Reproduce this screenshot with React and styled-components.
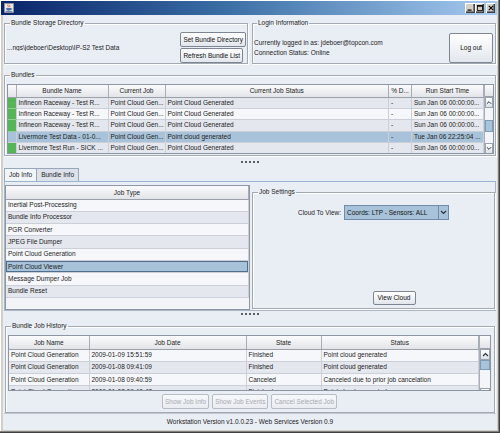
import React from 'react';
import styled, { createGlobalStyle, css } from 'styled-components';

const GlobalStyle = createGlobalStyle`
  html, body { margin: 0; padding: 0; width: 500px; height: 433px; overflow: hidden; background: #d4d0c8; }
  body { font-family: "Liberation Sans", Arial, sans-serif; font-size: 6.5px; color: #1c1c1c; }
  * { box-sizing: border-box; }
`;

const Window = styled.div`
  width: 500px;
  height: 433px;
  display: flex;
  flex-direction: column;
  padding: 1px 3px 3px 1px;
  background: #d4d0c8;
  box-shadow: inset -1px -1px 0 #404040, inset -2px -2px 0 #808080, inset 1px 1px 0 #ffffff;
`;

const TitleBar = styled.div`
  height: 14px;
  flex: none;
  display: flex;
  align-items: center;
  padding: 0 2px 0 3px;
  background: linear-gradient(to right, #0a246a 0%, #3a6ea5 45%, #a6caf0 100%);
`;

const TitleButtons = styled.div`
  margin-left: auto;
  display: flex;
  align-items: center;
`;

const WinButton = styled.div`
  width: ${p => p.$w || 10}px;
  height: 10px;
  margin-left: ${p => p.$gap || 0}px;
  background: #d4d0c8;
  box-shadow: inset 1px 1px 0 #ffffff, inset -1px -1px 0 #404040, inset -2px -2px 0 #808080;
  display: flex;
  align-items: center;
  justify-content: center;
`;

const Body = styled.div`
  flex: 1;
  margin-left: 2px;
  background: #e9edf4;
  display: flex;
  flex-direction: column;
  padding: 4px 1px 0 1px;
  min-height: 0;
`;

const TopRow = styled.div`
  display: grid;
  grid-template-columns: 244px 1fr;
  gap: 4px;
  height: 45px;
  flex: none;
`;

const Group = styled.fieldset`
  margin: ${p => p.$margin || '0'};
  min-width: 0;
  min-inline-size: 0;
  height: ${p => p.$h}px;
  padding: ${p => p.$pad || '5px 1px 0 2px'};
  border: 1px solid #a2a9b3;
  box-shadow: inset 1px 1px 0 #ffffff, 1px 1px 0 #ffffff;
  display: flex;
  flex-direction: ${p => p.$dir || 'row'};
  align-items: ${p => p.$align || 'stretch'};
  justify-content: ${p => p.$justify || 'flex-start'};
  flex: none;
`;

const Legend = styled.legend`
  padding: 0 1px;
  margin-left: 3px;
  line-height: 8px;
  font-size: 6.5px;
  color: #222;
`;

const PathText = styled.span`
  flex: 1;
  white-space: nowrap;
  overflow: hidden;
`;

const ButtonStack = styled.div`
  display: flex;
  flex-direction: column;
  align-items: flex-start;
  gap: 1px;
`;

const Button = styled.button`
  font-family: inherit;
  font-size: 6.5px;
  height: ${p => p.$h || 15}px;
  width: ${p => (p.$w ? `${p.$w}px` : 'auto')};
  padding: 0 2px;
  margin: 0;
  border: 1px solid #7d8692;
  border-radius: 2px;
  background: linear-gradient(#ffffff, #e2e6ec);
  color: #111;
  white-space: nowrap;
  line-height: 12px;
  flex: none;
  ${p => p.disabled && css`
    color: #a6abb3;
    border-color: #b7bdc5;
    background: linear-gradient(#f7f8fa, #e9ecf1);
  `}
`;

const InfoLines = styled.div`
  flex: 1;
  display: flex;
  flex-direction: column;
  line-height: 10px;
  white-space: nowrap;
`;

const TableFrame = styled.div`
  display: grid;
  grid-template-columns: 1fr ${p => p.$sb}px;
  height: ${p => p.$h}px;
  border: 1px solid #8d97a4;
  background: #f2f4f8;
  overflow: hidden;
  flex: none;
`;

const Table = styled.table`
  width: 100%;
  table-layout: fixed;
  border-collapse: collapse;
  border-spacing: 0;
  font-size: 6.5px;
  align-self: start;
`;

const Th = styled.th`
  height: ${p => p.$h}px;
  padding: 0;
  font-weight: normal;
  text-align: center;
  color: #222;
  background: linear-gradient(#fbfbfc, #e2e4e8);
  border-right: 1px solid #a8aeb7;
  border-bottom: 1px solid #9aa1ab;
  white-space: nowrap;
  overflow: hidden;
`;

const tones = {
  white: '#f6f7fa',
  gray: '#e4e7ed',
  sel: '#a8c3d9',
};

const Tr = styled.tr`
  height: ${p => p.$h}px;
  background: ${p => tones[p.$tone]};
`;

const Td = styled.td`
  padding: 0 1px 0 2px;
  border-right: 1px solid #cbd0d8;
  border-bottom: 1px solid #cbd0d8;
  white-space: nowrap;
  overflow: hidden;
  text-overflow: clip;
  line-height: 10px;
  ${p => p.$green && css`background: #56b556; border-bottom-color: #8fcf8f;`}
  ${p => p.$focus && css`box-shadow: inset 0 0 0 1px #4f6d8c;`}
`;

const SideCol = styled.div`
  display: flex;
  flex-direction: column;
  border-left: 1px solid #a8aeb7;
`;

const Corner = styled.div`
  height: ${p => p.$h}px;
  flex: none;
  background: linear-gradient(#fbfbfc, #e2e4e8);
  border-bottom: 1px solid #9aa1ab;
`;

const ScrollTrack = styled.div`
  flex: 1;
  display: flex;
  flex-direction: column;
  background: #f3f5f8;
`;

const ArrowBtn = styled.div`
  height: ${p => p.$h}px;
  flex: none;
  border: 1px solid #9aa3ae;
  background: linear-gradient(#ffffff, #dde1e7);
  display: flex;
  align-items: center;
  justify-content: center;
`;

const TrackSpace = styled.div`
  flex: 1;
  display: flex;
  flex-direction: column;
`;

const Thumb = styled.div`
  margin-top: ${p => p.$top}px;
  height: ${p => p.$h}px;
  border: 1px solid #7e9bb6;
  background: #a9c4da;
`;

const Splitter = styled.div`
  height: ${p => p.$h}px;
  flex: none;
  display: flex;
  justify-content: center;
  padding-top: ${p => p.$top}px;
  gap: 2px;
`;

const Dot = styled.span`
  width: 2px;
  height: 2px;
  background: #5a5f66;
`;

const TabStrip = styled.div`
  height: 13px;
  flex: none;
  display: flex;
  align-items: flex-end;
`;

const Tab = styled.div`
  height: 13px;
  padding: 0 4px;
  line-height: 12px;
  border: 1px solid #97a6b8;
  border-bottom: none;
  background: ${p => (p.$active ? '#f1f4f9' : '#dde2ea')};
  margin-left: ${p => (p.$active ? 0 : -1)}px;
  white-space: nowrap;
`;

const TabPanel = styled.div`
  height: 130px;
  flex: none;
  border: 1px solid #a9b5c4;
  border-top: 1px solid #98b4d0;
  padding: 3px 0 0 0;
  display: grid;
  grid-template-columns: 245px 1fr;
  gap: 2px;
  align-items: start;
`;

const ListFrame = styled.div`
  height: 125px;
  border: 1px solid #8d97a4;
  background: #f2f4f8;
  overflow: hidden;
`;

const FieldRow = styled.div`
  display: flex;
  align-items: center;
  justify-content: center;
  gap: 3px;
  white-space: nowrap;
`;

const Combo = styled.div`
  width: 105px;
  height: 15px;
  display: flex;
  border: 1px solid #6f8cab;
  background: #a8c3d9;
`;

const ComboText = styled.span`
  flex: 1;
  padding-left: 2px;
  line-height: 13px;
  white-space: nowrap;
  overflow: hidden;
  color: #111;
`;

const ComboArrow = styled.div`
  width: 10px;
  border-left: 1px solid #6f8cab;
  display: flex;
  align-items: center;
  justify-content: center;
`;

const ViewRow = styled.div`
  margin-top: auto;
  display: flex;
  justify-content: center;
  padding-left: 41px;
`;

const ButtonRow = styled.div`
  margin-top: 3px;
  display: flex;
  justify-content: center;
  gap: 3px;
`;

const StatusBar = styled.div`
  height: 17px;
  flex: none;
  border-top: 1px solid #c4c9d1;
  text-align: center;
  line-height: 15px;
  white-space: nowrap;
`;

const Chevron = ({ up }) => (
  <svg width="7" height="5" viewBox="0 0 7 5">
    <polyline
      points={up ? '1,4 3.5,1.5 6,4' : '1,1 3.5,3.5 6,1'}
      fill="none"
      stroke="#2b2f36"
      strokeWidth="1.1"
    />
  </svg>
);

const Scrollbar = ({ arrowH, thumbTop, thumbH }) => (
  <ScrollTrack>
    <ArrowBtn $h={arrowH}><Chevron up /></ArrowBtn>
    <TrackSpace>
      <Thumb $top={thumbTop} $h={thumbH} />
    </TrackSpace>
    <ArrowBtn $h={arrowH}><Chevron /></ArrowBtn>
  </ScrollTrack>
);

const Dots = ({ h, top }) => (
  <Splitter $h={h} $top={top}>
    {[0, 1, 2, 3, 4].map(i => <Dot key={i} />)}
  </Splitter>
);

const JavaIcon = () => (
  <svg width="10" height="10" viewBox="0 0 10 10">
    <rect x="0.5" y="0.5" width="9" height="9" fill="#e8e8e8" stroke="#9a9a9a" strokeWidth="0.6" />
    <path d="M4 1.5 C3 2.6 5 3.2 4 4.3 M5.8 1.8 C5 2.7 6.5 3.2 5.6 4.1" stroke="#d4431c" strokeWidth="0.8" fill="none" />
    <path d="M2.3 5 H7 V6.6 C7 8 2.3 8 2.3 6.6 Z" fill="#4a6fa5" />
    <path d="M7 5.4 C8.3 5.4 8.3 6.8 7 6.8" stroke="#4a6fa5" strokeWidth="0.7" fill="none" />
    <rect x="1.6" y="8.2" width="6.6" height="0.8" fill="#4a6fa5" />
  </svg>
);

const bundleRows = [
  { tone: 'gray', name: 'Infineon Raceway - Test R...', job: 'Point Cloud Gen...', status: 'Point Cloud Generated', pct: '-', start: 'Sun Jan 06 00:00:00...' },
  { tone: 'white', name: 'Infineon Raceway - Test R...', job: 'Point Cloud Gen...', status: 'Point Cloud Generated', pct: '-', start: 'Sun Jan 06 00:00:00...' },
  { tone: 'gray', name: 'Infineon Raceway - Test R...', job: 'Point Cloud Gen...', status: 'Point Cloud Generated', pct: '-', start: 'Sun Jan 06 00:00:00...' },
  { tone: 'sel', name: 'Livermore Test Data - 01-0...', job: 'Point Cloud Gen...', status: 'Point cloud generated', pct: '-', start: 'Tue Jan 06 22:25:04 ...' },
  { tone: 'gray', name: 'Livermore Test Run - SICK ...', job: 'Point Cloud Gen...', status: 'Point Cloud Generated', pct: '-', start: 'Sun Jan 06 00:00:00...' },
];

const jobTypes = [
  { name: 'Inertial Post-Processing', tone: 'white' },
  { name: 'Bundle Info Processor', tone: 'gray' },
  { name: 'PGR Converter', tone: 'white' },
  { name: 'JPEG File Dumper', tone: 'gray' },
  { name: 'Point Cloud Generation', tone: 'white' },
  { name: 'Point Cloud Viewer', tone: 'sel' },
  { name: 'Message Dumper Job', tone: 'white' },
  { name: 'Bundle Reset', tone: 'gray' },
];

const history = [
  { tone: 'white', name: 'Point Cloud Generation', date: '2009-01-09 15:51:59', state: 'Finished', status: 'Point cloud generated' },
  { tone: 'gray', name: 'Point Cloud Generation', date: '2009-01-08 09:41:09', state: 'Finished', status: 'Point cloud generated' },
  { tone: 'white', name: 'Point Cloud Generation', date: '2009-01-08 09:40:59', state: 'Canceled', status: 'Canceled due to prior job cancelation' },
  { tone: 'gray', name: 'Point Cloud Generation', date: '2009-01-08 09:40:47', state: 'Finished', status: 'Point cloud generated' },
];

export default function App() {
  return (
    <>
      <GlobalStyle />
      <Window>
        <TitleBar>
          <JavaIcon />
          <TitleButtons>
            <WinButton $w={10}>
              <svg width="6" height="6" viewBox="0 0 6 6"><rect x="0.5" y="4.5" width="4" height="1.2" fill="#000" /></svg>
            </WinButton>
            <WinButton $w={9}>
              <svg width="6" height="6" viewBox="0 0 6 6"><rect x="0.5" y="0.5" width="5" height="5" fill="none" stroke="#000" strokeWidth="0.8" /><rect x="0.5" y="0.5" width="5" height="1.2" fill="#000" /></svg>
            </WinButton>
            <WinButton $w={9} $gap={2}>
              <svg width="6" height="6" viewBox="0 0 6 6"><path d="M0.8 0.8 L5.2 5.2 M5.2 0.8 L0.8 5.2" stroke="#000" strokeWidth="1.1" /></svg>
            </WinButton>
          </TitleButtons>
        </TitleBar>

        <Body>
          <TopRow>
            <Group $h={45} $pad="5px 1px 0 2px" $align="center">
              <Legend>Bundle Storage Directory</Legend>
              <PathText>...ngs\jdeboer\Desktop\IP-S2 Test Data</PathText>
              <ButtonStack>
                <Button>Set Bundle Directory</Button>
                <Button>Refresh Bundle List</Button>
              </ButtonStack>
            </Group>
            <Group $h={45} $pad="5px 2px 0 1px" $align="center">
              <Legend>Login Information</Legend>
              <InfoLines>
                <span>Currently logged in as: jdeboer@topcon.com</span>
                <span>Connection Status: Online</span>
              </InfoLines>
              <Button $w={44} $h={30}>Log out</Button>
            </Group>
          </TopRow>

          <Group $h={85} $margin="7px 0 0 0" $pad="5px 1px 1px 2px" $dir="column">
            <Legend>Bundles</Legend>
            <TableFrame $sb={9} $h={70}>
              <Table>
                <colgroup>
                  <col style={{ width: 8 }} />
                  <col style={{ width: 92 }} />
                  <col style={{ width: 57 }} />
                  <col />
                  <col style={{ width: 23 }} />
                  <col style={{ width: 72 }} />
                </colgroup>
                <thead>
                  <tr>
                    <Th $h={12} />
                    <Th $h={12}>Bundle Name</Th>
                    <Th $h={12}>Current Job</Th>
                    <Th $h={12}>Current Job Status</Th>
                    <Th $h={12}>% D...</Th>
                    <Th $h={12}>Run Start Time</Th>
                  </tr>
                </thead>
                <tbody>
                  {bundleRows.map((r, i) => (
                    <Tr key={i} $h={11.4} $tone={r.tone}>
                      <Td $green={r.tone !== 'sel'} />
                      <Td>{r.name}</Td>
                      <Td>{r.job}</Td>
                      <Td>{r.status}</Td>
                      <Td>{r.pct}</Td>
                      <Td>{r.start}</Td>
                    </Tr>
                  ))}
                </tbody>
              </Table>
              <SideCol>
                <Corner $h={12} />
                <Scrollbar arrowH={11} thumbTop={12} thumbH={12} />
              </SideCol>
            </TableFrame>
          </Group>

          <Dots h={12} top={5} />

          <TabStrip>
            <Tab $active>Job Info</Tab>
            <Tab>Bundle Info</Tab>
          </TabStrip>
          <TabPanel>
            <ListFrame>
              <Table>
                <thead>
                  <tr><Th $h={13}>Job Type</Th></tr>
                </thead>
                <tbody>
                  {jobTypes.map((j, i) => (
                    <Tr key={i} $h={12.3} $tone={j.tone}>
                      <Td $focus={j.tone === 'sel'}>{j.name}</Td>
                    </Tr>
                  ))}
                </tbody>
              </Table>
            </ListFrame>
            <Group $h={121} $margin="3px 0 0 0" $pad="9px 2px 3px 2px" $dir="column">
              <Legend>Job Settings</Legend>
              <FieldRow>
                <span>Cloud To View:</span>
                <Combo>
                  <ComboText>Coords: LTP - Sensors: ALL</ComboText>
                  <ComboArrow><Chevron /></ComboArrow>
                </Combo>
              </FieldRow>
              <ViewRow>
                <Button $w={43} $h={14}>View Cloud</Button>
              </ViewRow>
            </Group>
          </TabPanel>

          <Dots h={11} top={2} />

          <Group $h={91} $margin="0 1px" $pad="5px 3px 3px 2px" $dir="column">
            <Legend>Bundle Job History</Legend>
            <TableFrame $sb={11} $h={56}>
              <Table>
                <colgroup>
                  <col style={{ width: 80 }} />
                  <col style={{ width: 157 }} />
                  <col style={{ width: 75 }} />
                  <col />
                </colgroup>
                <thead>
                  <tr>
                    <Th $h={13}>Job Name</Th>
                    <Th $h={13}>Job Date</Th>
                    <Th $h={13}>State</Th>
                    <Th $h={13}>Status</Th>
                  </tr>
                </thead>
                <tbody>
                  {history.map((r, i) => (
                    <Tr key={i} $h={12.3} $tone={r.tone}>
                      <Td>{r.name}</Td>
                      <Td>{r.date}</Td>
                      <Td>{r.state}</Td>
                      <Td>{r.status}</Td>
                    </Tr>
                  ))}
                </tbody>
              </Table>
              <SideCol>
                <Corner $h={13} />
                <Scrollbar arrowH={11} thumbTop={0} thumbH={10} />
              </SideCol>
            </TableFrame>
            <ButtonRow>
              <Button disabled>Show Job Info</Button>
              <Button disabled>Show Job Events</Button>
              <Button disabled>Cancel Selected Job</Button>
            </ButtonRow>
          </Group>

          <StatusBar>Workstation Version v1.0.0.23 - Web Services Version 0.9</StatusBar>
        </Body>
      </Window>
    </>
  );
}
